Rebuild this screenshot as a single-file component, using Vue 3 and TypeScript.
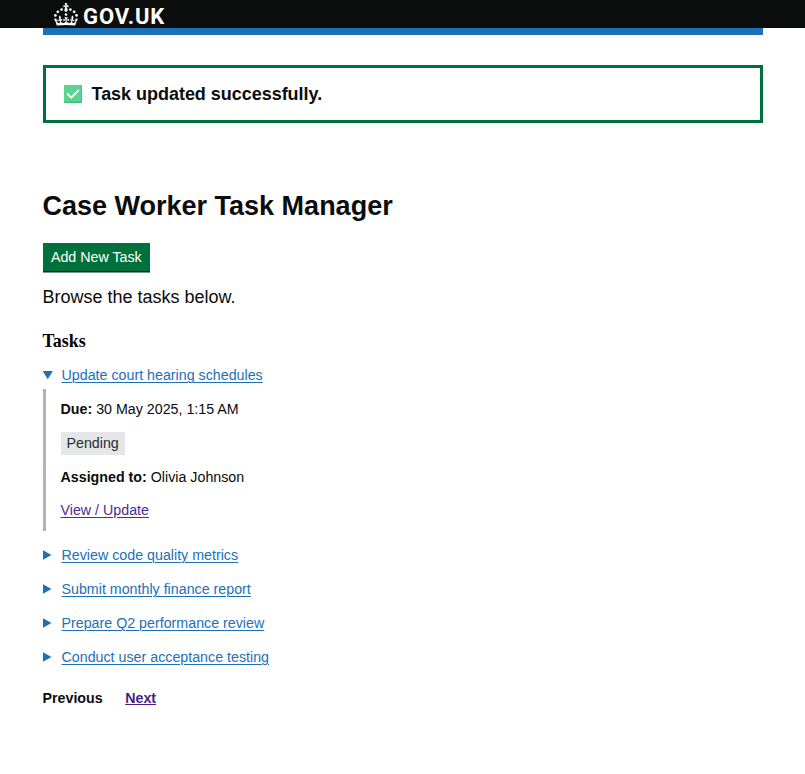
<script setup lang="ts">
import { ref } from 'vue'

interface Task {
  title: string
  due: string
  status: string
  assignee: string
}

const tasks: Task[] = [
  { title: 'Update court hearing schedules', due: '30 May 2025, 1:15 AM', status: 'Pending', assignee: 'Olivia Johnson' },
  { title: 'Review code quality metrics', due: '', status: '', assignee: '' },
  { title: 'Submit monthly finance report', due: '', status: '', assignee: '' },
  { title: 'Prepare Q2 performance review', due: '', status: '', assignee: '' },
  { title: 'Conduct user acceptance testing', due: '', status: '', assignee: '' },
]

const openIndex = ref<number>(0)

function toggle(index: number): void {
  openIndex.value = openIndex.value === index ? -1 : index
}
</script>

<template>
  <div class="page">
    <header class="header">
      <div class="logo">
        <svg class="crown" viewBox="0 0 32 30" aria-hidden="true">
          <path fill="#fff" d="M22.6 10.4c-1 .4-2-.1-2.4-1-.4-.9.1-2 1-2.4.9-.4 2 .1 2.4 1s-.1 2-1 2.4m-5.9 6.7c-.9.4-2-.1-2.4-1-.4-.9.1-2 1-2.4.9-.4 2 .1 2.4 1s-.1 2-1 2.4m10.8-3.7c-1 .4-2-.1-2.4-1-.4-.9.1-2 1-2.4.9-.4 2 .1 2.4 1s0 2-1 2.4m3.3 4.8c-1 .4-2-.1-2.4-1-.4-.9.1-2 1-2.4.9-.4 2 .1 2.4 1s-.1 2-1 2.4M17 4.7l2.3 1.2V2.5l-2.3.7-.2-.2.9-3h-3.4l.9 3-.2.2c-.1.1-2.3-.7-2.3-.7v3.4L15 4.7c.1.1.1.2.2.2l-1.3 4c-.1.2-.1.4-.1.6 0 1.1.8 2 1.9 2.2h.7c1-.2 1.9-1.1 1.9-2.1 0-.2 0-.4-.1-.6l-1.3-4c-.1-.2 0-.2.1-.3m-7.6 5.7c.9.4 2-.1 2.4-1 .4-.9-.1-2-1-2.4-.9-.4-2 .1-2.4 1s0 2 1 2.4m-5 3c.9.4 2-.1 2.4-1 .4-.9-.1-2-1-2.4-.9-.4-2 .1-2.4 1s.1 2 1 2.4m-3.2 4.8c.9.4 2-.1 2.4-1 .4-.9-.1-2-1-2.4-.9-.4-2 .1-2.4 1s0 2 1 2.4m14.8 11c4.4 0 8.6.3 12.3.8 1.1-4.5 2.4-7 3.7-8.8l-2.5-.9c.2 1.3.3 1.9 0 2.7-.4-.4-.8-1.1-1.1-2.3l-1.2 4c.7-.5 1.3-.8 2-.9-1.1 2.5-2.6 3.1-3.5 3-1.1-.2-1.7-1.2-1.5-2.1.3-1.2 1.5-1.5 2.1-.1 1.1-2.3-.8-3-2-2.3 1.9-1.9 2.1-3.5.6-5.6-2.1 1.6-2.1 3.2-1.2 5.5-1.2-1.4-3.2-.6-2.5 1.6.9-1.4 2.1-.5 1.9.8-.2 1.1-1.7 2.1-3.5 1.9-2.7-.2-2.9-2.1-2.9-3.6.7-.1 1.9.5 2.9 1.9l.4-4.3c-1.1 1.1-2.1 1.4-3.2 1.4.4-1.2 2.1-3 2.1-3h-5.4s1.7 1.9 2.1 3c-1.1 0-2.1-.2-3.2-1.4l.4 4.3c1-1.4 2.2-2 2.9-1.9-.1 1.5-.2 3.4-2.9 3.6-1.9.2-3.4-.8-3.5-1.9-.2-1.3 1-2.2 1.9-.8.7-2.3-1.2-3-2.5-1.6.9-2.2.9-3.9-1.2-5.5-1.5 2-1.3 3.7.6 5.6-1.2-.7-3.1 0-2 2.3.6-1.4 1.8-1.1 2.1.1.2.9-.3 1.9-1.5 2.1-.9.2-2.4-.5-3.5-3 .6 0 1.2.3 2 .9l-1.2-4c-.3 1.1-.7 1.9-1.1 2.3-.3-.8-.2-1.4 0-2.7l-2.9.9C1.3 23 2.6 25.5 3.7 30c3.7-.5 7.9-.8 12.3-.8" />
        </svg>
        <span class="wordmark">GOV.UK</span>
      </div>
    </header>

    <div class="container">
      <div class="brand-bar"></div>

      <div class="banner" role="status">
        <svg class="tick" viewBox="0 0 18 18" aria-hidden="true">
          <rect width="18" height="18" rx="1" fill="#43b97a" />
          <rect width="17.4" height="16.8" rx="1" fill="#5bd58d" />
          <path d="M3.2 8.6l4 4 7.6-7.6" fill="none" stroke="#fff" stroke-width="1.9" />
        </svg>
        <span>Task updated successfully.</span>
      </div>

      <main>
        <h1>Case Worker Task Manager</h1>
        <button class="add" type="button">Add New Task</button>
        <p class="lead">Browse the tasks below.</p>
        <h3>Tasks</h3>

        <div class="tasks">
          <section v-for="(task, i) in tasks" :key="task.title">
            <div class="summary" @click="toggle(i)">
              <span :class="['marker', { open: openIndex === i }]"></span>
              <span class="title">{{ task.title }}</span>
            </div>
            <div v-if="openIndex === i" class="details">
              <p><b>Due:</b> {{ task.due }}</p>
              <p class="tag-row"><span class="tag">{{ task.status }}</span></p>
              <p><b>Assigned to:</b> {{ task.assignee }}</p>
              <p class="action"><a href="#">View / Update</a></p>
            </div>
          </section>
        </div>

        <nav class="pager">
          <span>Previous</span>
          <a href="#">Next</a>
        </nav>
      </main>
    </div>
  </div>
</template>

<style>
body {
  background: #fff;
}
</style>

<style scoped>
.page {
  font-family: "Liberation Sans", Arial, sans-serif;
  font-size: 14.25px;
  line-height: 19px;
  color: #0b0c0c;
}
.header {
  height: 28px;
  background: #0b0c0c;
}
.logo {
  display: flex;
  align-items: flex-start;
  margin-left: 54px;
  padding-top: 3px;
}
.crown {
  width: 24px;
  height: 22.5px;
}
.wordmark {
  margin-left: 5px;
  font-family: Roboto, "Liberation Sans", sans-serif;
  font-weight: 700;
  font-size: 22px;
  letter-spacing: 0.9px;
  line-height: 27px;
  color: #fff;
}
.container {
  width: 720px;
  margin-left: 42.5px;
}
.brand-bar {
  height: 7px;
  background: #1d70b8;
}
.banner {
  display: flex;
  align-items: center;
  gap: 9.5px;
  box-sizing: border-box;
  height: 58px;
  margin-top: 30px;
  padding-left: 18.5px;
  border: 3px solid #00703c;
  font-size: 18px;
  letter-spacing: -0.03px;
  font-weight: 700;
}
.tick {
  width: 18px;
  height: 18px;
}
h1 {
  margin: 65px 0 0;
  font-size: 27px;
  line-height: 36px;
}
.add {
  display: block;
  height: 28px;
  margin: 19px 0 0;
  padding: 0 8.4px;
  border: 0;
  background: #00703c;
  box-shadow: 0 1.5px 0 #002d18;
  color: #fff;
  font: inherit;
}
.lead {
  margin: 14px 0 0;
  font-size: 18px;
  line-height: 24px;
}
h3 {
  margin: 21px 0 0;
  font-family: "Liberation Serif", "Times New Roman", serif;
  font-size: 17.9px;
  line-height: 22px;
  color: #000;
}
.tasks {
  display: flex;
  flex-direction: column;
  gap: 15px;
  margin-top: 14px;
}
.summary {
  display: flex;
  align-items: center;
  height: 19px;
  color: #1d70b8;
  cursor: pointer;
}
.marker {
  width: 9px;
  height: 10px;
  margin: 0 10px 1px 0;
  background: #1d70b8;
  clip-path: polygon(0 0, 100% 50%, 0 100%);
}
.marker.open {
  width: 10.5px;
  height: 8.5px;
  margin-right: 8.5px;
  clip-path: polygon(0 0, 100% 0, 50% 100%);
}
.title,
.action a {
  text-decoration: underline;
  text-decoration-thickness: 1px;
  text-underline-offset: 2px;
}
.details {
  box-sizing: border-box;
  height: 142px;
  margin-top: 4px;
  padding: 11px 0 0 15px;
  border-left: 3px solid #b1b4b6;
}
.details p {
  margin: 0 0 15px;
}
.details .tag-row {
  display: flex;
  margin: -2px 0 13px;
}
.tag {
  height: 23px;
  padding: 0 6px;
  line-height: 23px;
  background: #e5e6e7;
  color: #282d30;
}
.details .action {
  margin-top: -1px;
}
.action a {
  color: #4c2c92;
}
.pager {
  display: flex;
  gap: 22.5px;
  margin-top: 22px;
  font-weight: 700;
}
.pager a {
  color: #4c1d87;
}
</style>
